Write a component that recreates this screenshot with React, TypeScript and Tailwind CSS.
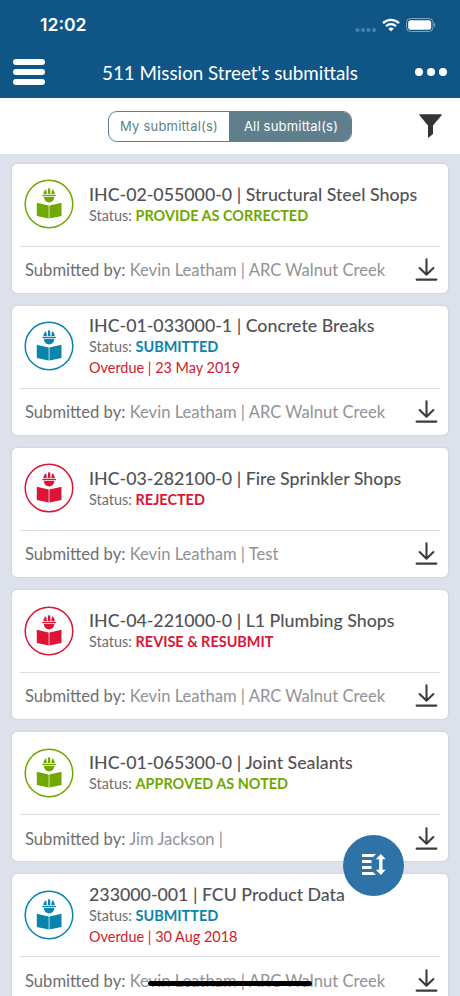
import { clsx } from "clsx";

type Tone = "green" | "blue" | "red";

interface Submittal {
  title: string;
  status: string;
  tone: Tone;
  overdue?: string;
  by: string;
}

const TONES: Record<Tone, string> = {
  green: "text-[#70a800]",
  blue: "text-[#0a84ab]",
  red: "text-[#dc1436]",
};

const SUBMITTALS: Submittal[] = [
  { title: "IHC-02-055000-0 | Structural Steel Shops", status: "PROVIDE AS CORRECTED", tone: "green", by: "Kevin Leatham | ARC Walnut Creek" },
  { title: "IHC-01-033000-1 | Concrete Breaks", status: "SUBMITTED", tone: "blue", overdue: "23 May 2019", by: "Kevin Leatham | ARC Walnut Creek" },
  { title: "IHC-03-282100-0 | Fire Sprinkler Shops", status: "REJECTED", tone: "red", by: "Kevin Leatham | Test" },
  { title: "IHC-04-221000-0 | L1 Plumbing Shops", status: "REVISE & RESUBMIT", tone: "red", by: "Kevin Leatham | ARC Walnut Creek" },
  { title: "IHC-01-065300-0 | Joint Sealants", status: "APPROVED AS NOTED", tone: "green", by: "Jim Jackson |" },
  { title: "233000-001 | FCU Product Data", status: "SUBMITTED", tone: "blue", overdue: "30 Aug 2018", by: "Kevin Leatham | ARC Walnut Creek" },
];

// Worker in a hard hat reading a plan book
function WorkerIcon({ tone }: { tone: Tone }) {
  return (
    <svg width="50" height="50" viewBox="0 0 50 50" fill="currentColor" className={clsx("mb-px shrink-0", TONES[tone])}>
      <circle cx="25" cy="25" r="23.8" fill="none" stroke="currentColor" strokeWidth="1.5" />
      <path d="M19.4 14.9c.1-2.1 1.1-3.8 2.7-4.7l.8 4.7zM23.8 14.9l.2-4.9c0-.4.3-.7.7-.7h.8c.4 0 .7.3.7.7l.2 4.9zM27.3 14.9l.8-4.7c1.6.9 2.6 2.6 2.7 4.7z" />
      <rect x="18.3" y="15.7" width="13.6" height="1.6" rx="0.6" />
      <path d="M19.8 18.1h10.6c-.3 3.3-2.4 5.3-5.3 5.3s-5-2-5.3-5.3z" />
      <path d="M12.8 23.8l11.9 2.6v13L12.8 36.9zM25.4 26.4l12.1-2.6v13.1l-12.1 2.5z" />
    </svg>
  );
}

function DownloadIcon() {
  return (
    <svg width="23" height="24" viewBox="0 0 23 24" fill="none" stroke="#3c3c3e" strokeWidth="2.1" strokeLinecap="round" strokeLinejoin="round">
      <path d="M11.5 1.3v15M4.6 10l6.9 6.7 6.9-6.7M1.6 21.6h19.8" />
    </svg>
  );
}

function SubmittalCard({ item }: { item: Submittal }) {
  return (
    <article className="flex h-[129.2px] shrink-0 flex-col rounded-[5px] bg-white px-2 shadow-[0_0_2px_rgba(110,120,150,0.35)]">
      <div className="flex h-[83px] items-center border-b border-[#dcdce2] pl-1">
        <WorkerIcon tone={item.tone} />
        <div className="mb-[0.8px] ml-[15px] whitespace-nowrap text-[14.45px] leading-[21px] text-[#6d6e71]">
          <h2 className="text-[17.8px] font-medium leading-[22px] text-[#515256]">{item.title}</h2>
          <p>
            Status: <span className={clsx("font-bold", TONES[item.tone])}>{item.status}</span>
          </p>
          {item.overdue && <p className="text-[#cf2128]">Overdue | {item.overdue}</p>}
        </div>
      </div>
      <div className="flex flex-1 items-center justify-between pl-[5px] pr-[2px] pt-[0.6px]">
        <p className="whitespace-nowrap text-[16.6px] leading-6 text-[#929295]">
          <span className="text-[#6d6e71]">Submitted by:</span> {item.by}
        </p>
        <DownloadIcon />
      </div>
    </article>
  );
}

function StatusBar() {
  return (
    <div className="flex h-[50px] items-center justify-between pl-10 pr-[24px]">
      <span className="pt-px font-['Inter','Liberation_Sans',sans-serif] text-[17.6px] font-semibold">12:02</span>
      <div className="flex items-center">
        <svg width="22" height="6" viewBox="0 0 22 6" fill="#6f9fc3" className="mt-[9px] opacity-60">
          <circle cx="2.5" cy="3" r="2.1" />
          <circle cx="8" cy="3" r="2.1" />
          <circle cx="13.5" cy="3" r="2.1" />
          <circle cx="19" cy="3" r="2.1" />
        </svg>
        <svg width="18" height="14" viewBox="0 0 18 14" fill="none" stroke="#fff" strokeWidth="2.3" className="ml-[5px]">
          <path d="M1 5.1C5.5.7 12.5.7 17 5.1M4 8.2c2.8-2.8 7.2-2.8 10 0" />
          <path d="M9 13.4L6.3 10.6c1.5-1.5 3.9-1.5 5.4 0z" fill="#fff" stroke="none" />
        </svg>
        <svg width="30" height="14" viewBox="0 0 30 14" className="ml-[6px]">
          <rect x="0.5" y="0.5" width="26.5" height="13" rx="4" fill="none" stroke="#fff" strokeOpacity="0.45" />
          <rect x="2.2" y="2.2" width="23" height="9.6" rx="2.5" fill="#fff" />
          <path d="M28.1 4.8c1.6.7 1.6 3.7 0 4.4z" fill="#fff" fillOpacity="0.5" />
        </svg>
      </div>
    </div>
  );
}

export default function App() {
  return (
    <div className="relative flex h-[996px] w-[460px] flex-col overflow-hidden bg-[#dce1eb] font-['Lato',sans-serif]">
      <header className="h-[98px] shrink-0 bg-[#0f5687] text-white">
        <StatusBar />
        <div className="flex h-[44px] items-center justify-between pl-[13px] pr-[13px]">
          <button className="flex w-8 flex-col gap-[4px]" aria-label="Menu">
            <span className="h-[6px] w-full rounded-full bg-white" />
            <span className="h-[6px] w-full rounded-full bg-white" />
            <span className="h-[6px] w-full rounded-full bg-white" />
          </button>
          <h1 className="whitespace-nowrap pt-px text-[18.8px] leading-6">511 Mission Street's submittals</h1>
          <button className="flex gap-[4px]" aria-label="More">
            <span className="size-[8px] rounded-full bg-white" />
            <span className="size-[8px] rounded-full bg-white" />
            <span className="size-[8px] rounded-full bg-white" />
          </button>
        </div>
      </header>

      <div className="flex h-[56px] shrink-0 items-center justify-between bg-white pl-[108px] pr-[18px]">
        <div className="flex h-[31px] w-[244px] overflow-hidden rounded-[9px] border border-[#5f7f8d] font-['Inter','Liberation_Sans',sans-serif] text-[13px] tracking-[0.2px]">
          <button className="w-[120px] pt-px text-[#5f7f8d]">My submittal(s)</button>
          <button className="flex-1 bg-[#5f7f8d] pl-[2px] pt-px text-white">All submittal(s)</button>
        </div>
        <svg width="23" height="24" viewBox="0 0 23 24" fill="#333435">
          <path d="M.8.3h21.4c.6 0 .7.5.4.9L14 11.6v8.3L9.8 23.6c-.4.3-.8.1-.8-.4V11.6L.4 1.2C.1.8.2.3.8.3z" />
        </svg>
      </div>

      <main className="flex flex-1 flex-col gap-[13px] px-3 pt-[9.5px]">
        {SUBMITTALS.map((item) => (
          <SubmittalCard key={item.title} item={item} />
        ))}
      </main>

      {/* Sort button floating over the list */}
      <button className="absolute left-[343px] top-[834.5px] flex size-[61px] items-center justify-center rounded-full bg-[#2e73a8]" aria-label="Sort">
        <svg width="24" height="22" viewBox="0 0 24 22" fill="#fff">
          <path d="M0 0h14l-3 3H0zM0 6h9.5v3H0zM0 12h9.5v3H0zM0 18h11l3 3H0z" />
          <path d="M18.8 0l5 5.3h-3.3v10.4h3.3l-5 5.3-5-5.3h3.3V5.3h-3.3z" />
        </svg>
      </button>

      {/* Home indicator */}
      <div className="absolute bottom-[10px] left-[148px] h-[5px] w-[164px] rounded-full bg-black" />
    </div>
  );
}
